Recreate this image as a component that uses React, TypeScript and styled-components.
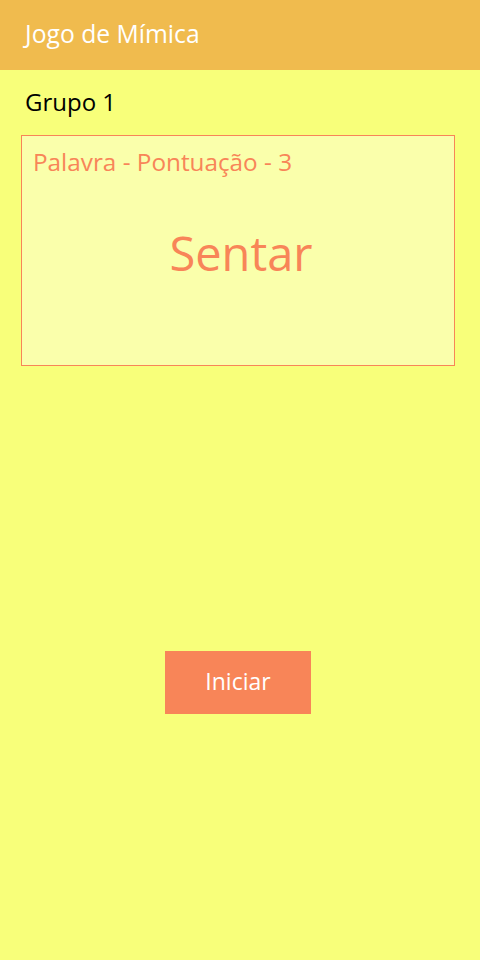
import React from "react";
import styled, { createGlobalStyle } from "styled-components";

const Global = createGlobalStyle`
  html, body { margin: 0; padding: 0; }
  body {
    background: #f8ff7a;
    font-family: "Open Sans", "Noto Sans", sans-serif;
    min-height: 960px;
  }
`;

const Page = styled.div`
  display: flex;
  flex-direction: column;
  min-height: 960px;
  background: #f8ff7a;
`;

const Header = styled.header`
  height: 70px;
  background: #f0bb4e;
  display: flex;
  align-items: center;
  padding: 0 25px 4px;
  box-sizing: border-box;
`;

const Title = styled.h1`
  margin: 0;
  font-size: 24.7px;
  font-weight: 400;
  color: #ffffff;
`;

const Main = styled.main`
  display: flex;
  flex-direction: column;
  padding: 0 25px 0 21px;
`;

const Group = styled.div`
  height: 65px;
  display: flex;
  align-items: center;
  padding: 0 0 2px 4px;
  box-sizing: border-box;
  font-size: 24px;
  color: #000;
`;

const Card = styled.section`
  height: 231px;
  box-sizing: border-box;
  border: 1px solid #f88558;
  background: #faffab;
  display: flex;
  flex-direction: column;
  padding: 9px 11px;
`;

const CardLabel = styled.div`
  font-size: 24.3px;
  color: #f88558;
  line-height: 34px;
`;

const Word = styled.div`
  font-size: 47px;
  color: #f88558;
  text-align: center;
  margin-top: 46px;
  padding-left: 6px;
  line-height: 56px;
`;

const Actions = styled.div`
  display: flex;
  justify-content: center;
  margin-top: 285px;
`;

const Button = styled.button`
  width: 146px;
  height: 63px;
  border: none;
  background: #f88558;
  color: #fff;
  font-family: inherit;
  font-size: 23px;
  padding: 0 0 4px;
  cursor: pointer;
`;

export default function App() {
  return (
    <Page>
      <Global />
      <Header>
        <Title>Jogo de Mímica</Title>
      </Header>
      <Main>
        <Group>Grupo 1</Group>
        <Card>
          <CardLabel>Palavra - Pontuação - 3</CardLabel>
          <Word>Sentar</Word>
        </Card>
        <Actions>
          <Button>Iniciar</Button>
        </Actions>
      </Main>
    </Page>
  );
}
